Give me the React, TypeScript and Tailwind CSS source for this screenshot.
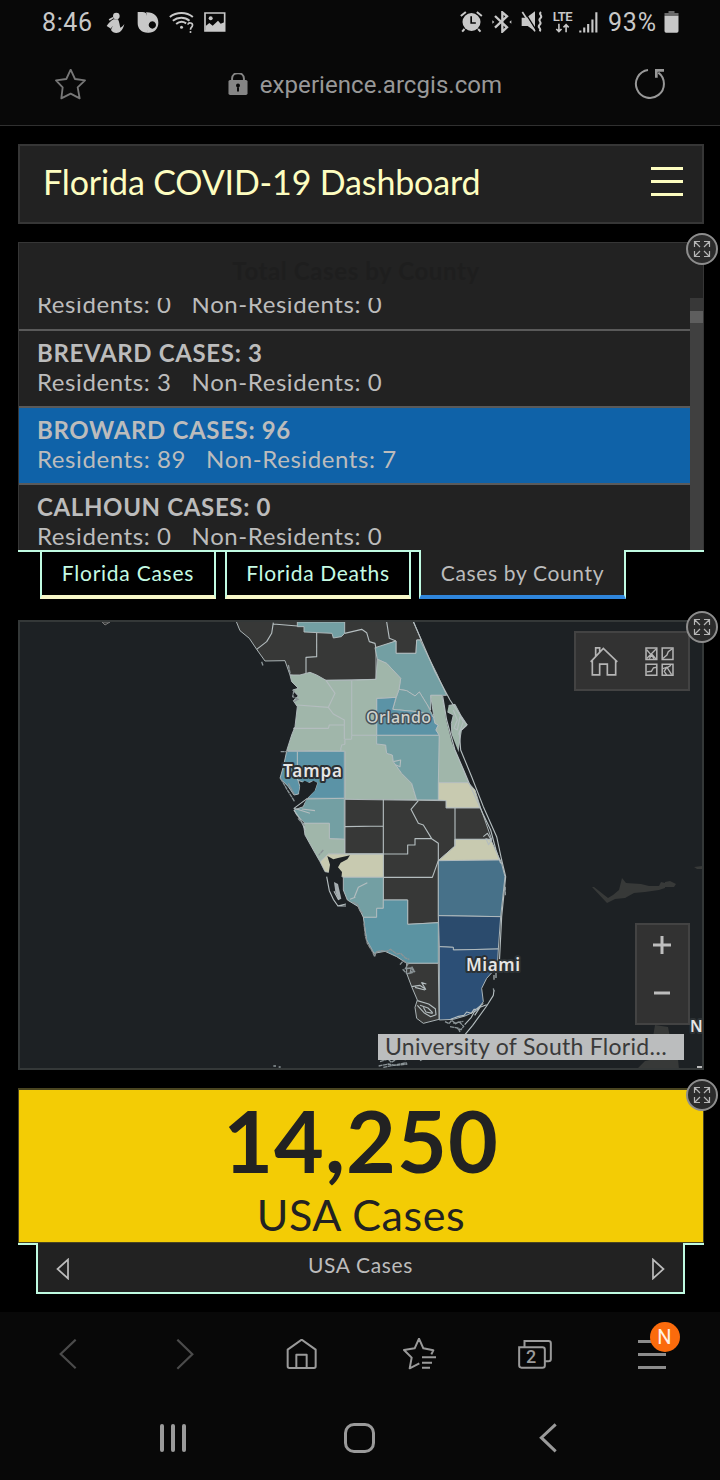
import React from "react";

type IconProps = {
  box: string;
  className: string;
  children: React.ReactNode;
};

function Icon({ box, className, children }: IconProps) {
  return (
    <svg viewBox={box} className={className} fill="none" stroke="currentColor">
      {children}
    </svg>
  );
}

function StatusBar() {
  return (
    <div className="flex h-[44px] items-center justify-between pl-[42px] pr-[41px] text-[#c8c8c8]">
      <div className="flex items-center">
        <span className="w-[64px] text-[25px] leading-none tracking-[0.6px]">8:46</span>
        <Icon box="318 30 57 66" className="h-[22px] w-[19px]">
          <g fill="currentColor" stroke="none">
            <circle cx="349" cy="45" r="10" />
            <path d="M341 55c-9 5-16 12-21 20l13 8c2-4 3-6 5-8l-5 12c6 11 22 11 29 4 5-5 9-12 11-22-4 6-7 9-12 11-2-5-3-19-7-25z" />
            <path d="M326 55l12-7 3 4-12 7z" />
          </g>
        </Icon>
        <Icon box="412 30 66 66" className="ml-[12px] h-[22px] w-[22px]">
          <g fill="currentColor" stroke="none">
            <path d="M414 33h14c9 0 14 5 14 12v38c0 4 2 8 6 12-20 2-34-10-34-28z" />
            <path fillRule="evenodd" d="M439 34c24-1 37 13 37 31s-12 30-29 30c-3-3-6-7-6-12V47c0-6 0-9-2-13zM458 61a11 11 0 1 0 .1 0z" />
          </g>
        </Icon>
        <Icon box="507 30 74 66" className="ml-[10px] h-[22px] w-[25px]">
          <g strokeWidth="6">
            <path d="M509 48c20-16 50-16 69 0M518 59c15-12 36-12 50 0M528 69c9-8 21-8 30-2" />
            <path d="M563 71c2-8 15-6 14 2-1 7-6 6-6 13" strokeWidth="5" />
          </g>
          <circle cx="544" cy="79" r="4.500" fill="currentColor" stroke="none" />
          <circle cx="571" cy="93" r="3" fill="currentColor" stroke="none" />
        </Icon>
        <Icon box="611 32 66 66" className="ml-[10px] h-[22px] w-[22px]">
          <path d="M614 38h59v54h-59z" strokeWidth="5" />
          <path d="M616 92V77l11-9 10 8 16-15 8 9 11-4v26z" fill="currentColor" stroke="none" />
          <circle cx="631" cy="54" r="6" fill="currentColor" stroke="none" />
        </Icon>
      </div>
      <div className="flex items-center">
        <Icon box="298 30 68 66" className="h-[22px] w-[23px]">
          <circle cx="332" cy="63" r="27" fill="currentColor" stroke="none" />
          <path d="M300 45l15-12M363 45l-15-12M311 84l-7 8M352 84l7 8" strokeWidth="6" />
          <path d="M331 46v20h14" stroke="#080808" strokeWidth="5" />
        </Icon>
        <Icon box="395 30 60 66" className="ml-[9px] h-[22px] w-[20px]">
          <path d="M404 45l36 34-14 13V34l14 12-36 34" strokeWidth="7" />
          <path d="M396 58l6 5-6 5zM453 58l-6 5 6 5z" fill="currentColor" stroke="none" />
        </Icon>
        <Icon box="483 30 69 66" className="ml-[9px] h-[22px] w-[23px]">
          <path d="M485 50h14l26-19v60l-22-16h-18z" fill="currentColor" stroke="none" />
          <path d="M491 28l38 60" strokeWidth="4" stroke="#080808" />
          <path d="M487 33l38 58" strokeWidth="5" />
          <path d="M543 33c-10 8 8 10-2 19s8 10-2 19 8 10 0 20" strokeWidth="6" />
        </Icon>
        <span className="ml-[8px] flex h-[23px] w-[21px] flex-col items-center">
          <span className="text-[13px] font-semibold leading-[12px] tracking-[-0.5px]">LTE</span>
          <Icon box="585 68 46 30" className="h-[10px] w-[15px]">
            <path d="M597 70v22M589 86l8 8 8-8M619 96V74M611 81l8-8 8 8" strokeWidth="5" />
          </Icon>
        </span>
        <Icon box="658 30 58 66" className="ml-[6px] h-[22px] w-[19px]">
          <path d="M662 95v-6M674 95V80M686 95V69M699 95V55M711 95V33" strokeWidth="6.500" />
        </Icon>
        <span className="ml-[10px] w-[56px] text-[25px] leading-none tracking-[0.8px]">93%</span>
        <Icon box="914 30 44 66" className="h-[22px] w-[15px]">
          <path d="M915 44v-8h12v-6h18v6h12v8z" fill="#6a6a6a" stroke="none" />
          <path d="M915 44h42v46q0 5-5 5h-32q-5 0-5-5z" fill="currentColor" stroke="none" />
        </Icon>
      </div>
    </div>
  );
}

function AddressBar() {
  return (
    <div className="flex h-[81px] items-center justify-between pl-[55px] pr-[54px] text-[#989898]">
      <Icon box="164 207 93 96" className="h-[32px] w-[31px] text-[#777]">
        <path d="M211 209l13 28 30 4-22 21 6 33-27-14-28 14 4-33-20-21 31-4z" strokeWidth="5.500" strokeLinejoin="round" />
      </Icon>
      <div className="flex items-center gap-[12px] pl-[10px]">
        <Icon box="683 219 60 70" className="h-[23px] w-[20px] text-[#858585]">
          <path d="M695 242v-6c0-22 36-22 36 0v6" strokeWidth="6" />
          <rect x="684" y="240" width="58" height="46" rx="5" fill="currentColor" stroke="none" />
          <path d="M713 262v13" stroke="#080808" strokeWidth="6" />
          <circle cx="713" cy="257" r="6" fill="#080808" stroke="none" />
        </Icon>
        <span className="text-[24px] leading-none tracking-[0.05px]">experience.arcgis.com</span>
      </div>
      <Icon box="819 207 96 96" className="h-[32px] w-[32px]">
        <path d="M861 210a42 42 0 1 0 31 8" strokeWidth="6" />
        <path d="M886 233v-22h23" strokeWidth="8" />
      </Icon>
    </div>
  );
}

function ExpandButton({ place }: { place: string }) {
  return (
    <button className={`absolute flex h-[32px] w-[32px] items-center justify-center rounded-full border-2 border-[#8d8d8d] bg-[#2b2b2b] text-[#b5b5b5] ${place}`}>
      <Icon box="0 0 18 18" className="h-[18px] w-[18px]">
        <path d="M1.500 7V1.500H7M2 2l5 5M11 1.500h5.500V7M16 2l-5 5M1.500 11v5.500H7M2 16l5-5M11 16.500h5.500V11M16 16l-5-5" strokeWidth="1.200" />
      </Icon>
    </button>
  );
}

type County = { name: string; cases: number; residents: number; visitors: number; active?: boolean };

const counties: County[] = [
  { name: "BREVARD", cases: 3, residents: 3, visitors: 0 },
  { name: "BROWARD", cases: 96, residents: 89, visitors: 7, active: true },
  { name: "CALHOUN", cases: 0, residents: 0, visitors: 0 },
];

function Breakdown({ residents, visitors }: { residents: number; visitors: number }) {
  return (
    <p className="whitespace-pre text-[24px] leading-[29px] tracking-[0.58px]">
      {`Residents: ${residents}   Non-Residents: ${visitors}`}
    </p>
  );
}

function CountyList() {
  return (
    <section className="relative mt-[18px] flex h-[308px] flex-col border-x border-t border-[#363636] bg-[#222]">
      <h2 className="flex h-[55px] items-center justify-center pr-[10px] text-[24px] font-bold tracking-[0.6px] text-[#1e1e1e]">
        Total Cases by County
      </h2>
      <div className="flex min-h-0 flex-1">
        <div className="flex flex-1 flex-col overflow-hidden text-[#bcbcbc]">
          <div className="flex h-[33px] shrink-0 flex-col justify-end overflow-hidden border-b-2 border-[#5a5a5a] pb-[11px] pl-[18px]">
            <Breakdown residents={0} visitors={0} />
          </div>
          {counties.map((c) => (
            <div
              key={c.name}
              className={
                c.active
                  ? "h-[77px] shrink-0 border-b-2 border-[#5a5a5a] bg-[#0f62a8] pl-[18px] pt-[8px]"
                  : "h-[77px] shrink-0 border-b-2 border-[#5a5a5a] pl-[18px] pt-[8px]"
              }
            >
              <p className="text-[24px] font-bold leading-[28px] tracking-[0.65px]">
                {c.name} CASES: {c.cases}
              </p>
              <Breakdown residents={c.residents} visitors={c.visitors} />
            </div>
          ))}
        </div>
        <div className="w-[13px] bg-[#404040]">
          <div className="h-[13px] bg-[#383838]" />
          <div className="h-[12px] bg-[#5e5e5e]" />
        </div>
      </div>
      <ExpandButton place="right-[-15px] top-[-10px]" />
    </section>
  );
}

function Tabs() {
  return (
    <div className="flex h-[49px] text-[21px] text-[#c5fbe4]">
      <div className="w-[22px] border-t-2 border-[#c0fbe2]" />
      <div className="flex w-[176px] justify-center border-2 border-b-4 border-[#c0fbe2] border-b-[#f7f7c8] pt-[6px] leading-[30px] tracking-[0.75px]">
        Florida Cases
      </div>
      <div className="w-[9px] border-t-2 border-[#c0fbe2]" />
      <div className="flex w-[186px] justify-center border-2 border-b-4 border-[#c0fbe2] border-b-[#f7f7c8] pt-[6px] leading-[30px] tracking-[0.65px]">
        Florida Deaths
      </div>
      <div className="w-[8px] border-t-2 border-[#c0fbe2]" />
      <div className="flex w-[207px] justify-center border-x-2 border-b-4 border-x-[#c0fbe2] border-b-[#2f86dc] bg-[#222] pt-[8px] leading-[30px] tracking-[0.65px] text-[#bcbcbc]">
        Cases by County
      </div>
      <div className="flex-1 border-t-2 border-[#c0fbe2]" />
    </div>
  );
}

const regions: { fill: string; points: string }[] = [
  { fill: "#373837", points: "47,30 60,62 88,85 110,118 135,153 195,152 210,195 318,211 468,208 468,115 528,93 528,130 588,130 590,90 604,90 578,30" },
  { fill: "#739fa3", points: "232,36 374,36 374,70 364,80 340,84 336,70 252,66 252,50 232,50" },
  { fill: "#739fa3", points: "465,113 528,93 528,130 588,130 590,90 600,90 650,190 680,256 632,256 632,300 622,285 598,246 585,258 560,242 537,238 542,205 500,160 472,148" },
  { fill: "#739fa3", points: "537,238 560,242 585,258 598,246 622,285 640,320 600,306 518,298 528,265" },
  { fill: "#5b93a6", points: "470,265 528,262 518,298 600,306 640,320 645,340 655,345 648,360 658,376 470,376" },
  { fill: "#a0b6aa", points: "395,211 468,208 472,148 500,160 542,205 537,238 528,262 470,265 470,376 395,376" },
  { fill: "#a0b6aa", points: "210,195 240,195 270,187 290,195 318,211 395,211 395,388 375,388 375,403 365,405 362,424 200,422 215,375 225,350 232,290 220,272 235,258 218,240 235,235 215,215" },
  { fill: "#a0b6aa", points: "375,388 395,388 395,376 470,376 470,402 497,405 500,430 517,435 520,455 545,490 575,520 590,570 375,568 375,424 362,424 365,405 375,403" },
  { fill: "#739fa3", points: "470,376 658,376 658,570 590,570 575,520 545,490 520,455 517,435 500,430 497,405 470,402" },
  { fill: "#a0b6aa", points: "632,256 665,256 675,300 690,370 715,440 745,518 655,518 658,376 648,360 655,345 645,340 640,310" },
  { fill: "#c8cab0", points: "655,518 745,518 765,540 782,594 678,594 678,572 655,570" },
  { fill: "#a0b6aa", points: "677,288 705,283 722,315 742,345 724,362 714,425 696,385 694,340 700,315 680,305" },
  { fill: "#5b93a6", points: "232,424 373,424 373,565 262,565 285,540 292,518 275,515 258,520 232,510" },
  { fill: "#5b93a6", points: "200,424 232,424 232,505 240,530 236,552 222,555 205,530 180,505 190,470" },
  { fill: "#739fa3", points: "258,567 373,565 373,688 328,686 328,640 255,640 230,615 222,600 250,590" },
  { fill: "#a0b6aa", points: "250,640 328,640 328,686 375,688 375,732 325,732 300,755 280,720 255,675" },
  { fill: "#373837", points: "375,568 678,572 678,594 782,594 815,688 705,688 705,708 655,752 655,938 563,943 563,870 490,870 490,732 375,732" },
  { fill: "#c8cab0", points: "705,688 812,688 840,750 655,752 705,708" },
  { fill: "#c8cab0", points: "300,755 325,732 490,732 490,802 370,802 345,790 315,785" },
  { fill: "#739fa3", points: "370,802 490,802 490,895 470,895 470,922 430,922 415,890 382,870 370,840" },
  { fill: "#5b93a2", points: "490,870 563,870 563,943 655,938 655,1060 560,1060 530,1040 495,1024 462,1030 440,990 434,950 430,922 470,922 470,895 490,895" },
  { fill: "#477189", points: "655,752 842,750 855,800 842,920 655,917" },
  { fill: "#2b4b6d", points: "655,917 842,920 835,1017 700,1020 700,1012 658,1010" },
  { fill: "#2c4f76", points: "658,1010 700,1012 700,1020 835,1017 832,1070 800,1105 785,1135 790,1175 770,1202 735,1218 700,1228 658,1230" },
  { fill: "#373837", points: "560,1060 655,1060 657,1228 610,1240 590,1225 585,1192 592,1170 575,1130 560,1090" },
];

const borders: string[] = [
  "M160 38L155 70 140 95 110 118M160 42L232 48M290 68V140L258 142V190M374 70L425 58 440 68 448 95 465 100 468 115M500 36L508 85 528 93",
  "M318 211L345 250 325 292M232 285L325 292 340 312 373 330V388M220 355L325 355 328 345H373M520 455l22-5-2 20-14-6",
  "M375 650L490 648M490 568V732M375 732H563V705H585V686H635M595 572L573 598 595 640 610 645 635 686 655 700V752L637 802H490M705 594V708",
  "M578 30L645 185 690 270 740 345 718 365 722 420 755 500 790 590 830 680 845 750 857 800 845 920 838 1060",
  "M668 258L680 330 705 420 735 490 752 530 788 610 812 660 828 720 842 760",
  "M700 300l12 30-10 24 10 6 8-40 10 14-14 40",
  "M403 862L415 832 442 818M390 868l16-6",
  "M262 565L222 595 270 610M222 600l20 30 14 30M245 597l40 5",
  "M320 800l8 42 12 26 14 20 24 0M352 888l26-6M356 870l-14-26",
  "M575 1130l24-4 18 12-12-20 14 4M585 1132l30 8M592 1172l34 10 20 14 2 18-16 6-20-12-20-22M600 1186l24 8 14 14M610 1192l8 14 20 4",
  "M692 1228l20-8 20-4 8-10 14 4 8-12 14-2M822 1140l-2 16-20 32-42 58-28 34M790 1180l-24 20-12 22-20 22M800 1184l-20 8-16 24",
  "M822 1095v14M828 1080v24M790 680l12-10 12 20-8 14-8-18 18 6",
];

const specks: string[] = [
  "M125 155l4 12M205 165l6 28M222 240l-4 20 16 8-14 8M182 425h22M182 505l20 35 22 35M205 520l18 34M310 720l-14 16M234 625l20 22",
  "M398 876l14 6 8 20 8 8M432 940l4 36 6 24 14 22 8 18 4-14 16-4 16 2 12-6 18 14 12-2 14 14 12 4M540 1064l10-12 14 10-8 14 18-2-4 16 12-4-8-14M548 1078l14 14 16-8M575 1070l10 16",
  "M675 1235l12 6 8-10 12 10 10-6 14 14-8 10-12-4M690 1250l24 4 6 12M700 1240l30-6M480 1355l24-8 10 10 20-12 24 4M476 1368l30-6 20 4 36-4M500 1340l40-4M490 1372l70-14",
  "M600 1352l50-28M666 1306l4-6M820 1135l2 10M160 1368h8M176 1371h6M856 830v26",
];

function FloridaMap() {
  return (
    <svg viewBox="20 622 682 446" className="h-full w-full">
      <g fill="#373938">
        <path d="M592 887l2 0 14 11 5-3 6-5 3-12 4 5 15 1 8 2 10 0 2-4 4 1v5l-6 2-14 2-11 1-9 5-10 1-8 4z" />
        <path d="M665 882l5-1 6 3-2 3-9 0z" />
        <path d="M655 1025l13 2 2 10 7 12 2 20h-42l8-8 9-2-2-16z" />
        <path d="M694 867l8-1v3h-5z" />
        <path d="M102 622l8 0-5 3z" stroke="#777" />
      </g>
      <g transform="translate(220 610) scale(0.33333)">
        {regions.map((r) => (
          <polygon key={r.points} points={r.points} fill={r.fill} stroke="#b4bdbf" strokeWidth="2.800" strokeLinejoin="round" />
        ))}
        <path d="M242 522l12-10 16 8 10-8 12 6-8 24-22 22-14 24-22 6-8-14 22-14-2-20z" fill="#1d2124" />
        <path d="M322 738l18 10 14-4 36-8-8 12-20 10-8 14 12 14-2 20-8 14 6 30 10 20-16 4-16-30-16-26-6-18 8-10 4-26z" fill="#1d2124" />
        <path d="M342 816l12 6 10 44-8 4-10-24z" fill="#a5adb0" />
        <path d="M672 270l14 16-4 20 10 60 30 76 20 50-14-20-32-74-18-70z" fill="#1d2124" />
        {borders.map((d) => (
          <path key={d} d={d} fill="none" stroke="#b4bdbf" strokeWidth="3.400" strokeLinejoin="round" />
        ))}
        {specks.map((d) => (
          <path key={d} d={d} fill="none" stroke="#8b9497" strokeWidth="4" strokeDasharray="12 1.500" />
        ))}
      </g>
      <g
        fontFamily="'Noto Sans', sans-serif"
        fontSize="17"
        fontWeight="600"
        fill="#e6e6e6"
        stroke="#2c3134"
        strokeWidth="4"
        strokeLinejoin="round"
        paintOrder="stroke"
      >
        <text x="366" y="723" fontSize="16" fontWeight="500" fill="#d0d2ce" stroke="#45525a" strokeWidth="3" textLength="65">Orlando</text>
        <text x="283" y="777" textLength="59">Tampa</text>
        <text x="466" y="971" textLength="54">Miami</text>
        <text x="690" y="1032" fontSize="16">N</text>
      </g>
      <path d="M697 1067h5" stroke="#bbb" strokeWidth="2" />
    </svg>
  );
}

function MapPanel() {
  return (
    <section className="relative mt-[21px] h-[450px] border-2 border-[#343838] bg-[#1d2124]">
      <FloridaMap />
      <div className="absolute right-[12px] top-[9px] flex h-[60px] w-[116px] items-center border-2 border-[#434343] bg-[#323232] text-[#b5b5b5]">
        <Icon box="90 140 84 92" className="ml-[14px] h-[31px] w-[28px]">
          <path d="M92 187l38-40 42 40M97 183v43h22v-32h23v32h25v-43M107 170v-25h12v12" strokeWidth="5" />
        </Icon>
        <Icon box="257 142 86 86" className="ml-[27px] h-[29px] w-[29px]">
          <path d="M260 145h32v34h-32zM308 145h32v34h-32zM260 193h32v33h-32zM308 193h32v33h-32z" strokeWidth="4.500" />
          <path d="M262 150l12 14-12 12M290 148l-14 14 14 16M270 177l6-12 8 12M310 176l12-10 4-10 12-9M262 216l14-2 6-10 10-2M310 206l12-4 14 22M322 202l-8 12 8 12M334 196l-12 8" strokeWidth="4" />
        </Icon>
      </div>
      <div className="absolute bottom-[43px] right-[12px] flex h-[102px] w-[55px] flex-col items-center border-2 border-[#434343] bg-[#323232] pr-[1px] text-[#bdbdbd]">
        <Icon box="0 0 18 18" className="mt-[11px] h-[18px] w-[18px]">
          <path d="M9 0v18M0 9h18" strokeWidth="3" />
        </Icon>
        <Icon box="0 0 16 4" className="mt-[37px] h-[4px] w-[16px]">
          <path d="M0 2h16" strokeWidth="3" />
        </Icon>
      </div>
      <div className="absolute bottom-[8px] right-[18px] h-[26px] w-[306px] whitespace-nowrap bg-[#bbbdbe] pl-[7px] text-[23px] leading-[24px] tracking-[0.27px] text-[#3a3a3a]">
        University of South Florid…
      </div>
      <ExpandButton place="right-[-16px] top-[-11px]" />
    </section>
  );
}

function TotalPanel() {
  return (
    <section className="relative mt-[18px]">
      <div className="flex h-[155px] flex-col items-center border border-t-2 border-[#4a4520] bg-[#f3cc05] text-[#222]">
        <p className="mt-[6px] text-[86px] font-bold leading-[88px] tracking-[1px]">14,250</p>
        <p className="mt-[5px] text-[43px] leading-[52px] tracking-[0.6px]">USA Cases</p>
      </div>
      <div className="flex h-[51px]">
        <div className="w-[18px] border-t-2 border-[#c0fbe2]" />
        <div className="flex flex-1 items-center justify-between border-x-2 border-b-2 border-[#c0fbe2] bg-[#222] px-[18px] text-[#bcbcbc]">
          <Icon box="0 0 13 22" className="mt-[2px] h-[22px] w-[13px]">
            <path d="M12 1.500v19L1.500 11z" strokeWidth="1.700" />
          </Icon>
          <span className="mb-[6px] text-[21px] leading-none tracking-[0.65px]">USA Cases</span>
          <Icon box="0 0 13 22" className="mt-[2px] h-[22px] w-[13px]">
            <path d="M1 1.500v19L11.500 11z" strokeWidth="1.700" />
          </Icon>
        </div>
        <div className="w-[19px] border-t-2 border-[#c0fbe2]" />
      </div>
      <ExpandButton place="right-[-14px] top-[-9px]" />
    </section>
  );
}

function BrowserNav() {
  return (
    <nav className="flex h-[84px] items-center text-[#9a9a9a]">
      <div className="flex w-[126px] justify-center pl-[10px]">
        <Icon box="178 117 54 93" className="h-[31px] w-[18px] text-[#4b4b4b]">
          <path d="M228 119l-45 43 45 43" strokeWidth="6.500" />
        </Icon>
      </div>
      <div className="flex w-[117px] justify-center">
        <Icon box="530 117 54 93" className="h-[31px] w-[18px] text-[#4b4b4b]">
          <path d="M534 119l45 44-45 43" strokeWidth="6.500" />
        </Icon>
      </div>
      <div className="flex w-[117px] justify-center">
        <Icon box="859 117 93 93" className="h-[31px] w-[31px]">
          <path d="M864 149l42-30 42 30v50q0 5-5 5h-74q-5 0-5-5zM890 204v-40h31v40" strokeWidth="6" strokeLinejoin="round" />
        </Icon>
      </div>
      <div className="flex w-[117px] justify-center">
        <Icon box="126 115 102 96" className="h-[32px] w-[34px]">
          <path d="M214 164l6-12-30-6-13-29-13 29-32 5 23 23-6 32 29-15M186 173h42M186 189h30M186 204h24" strokeWidth="6" strokeLinejoin="round" />
        </Icon>
      </div>
      <div className="flex w-[117px] justify-center">
        <div className="relative h-[29px] w-[35px]">
          <Icon box="475 119 104 87" className="h-[29px] w-[35px]">
            <path d="M478 141h70q7 0 7 7v48q0 6-7 6h-63q-7 0-7-7zM494 138v-16h72q7 0 7 7v47q0 7-7 7h-9" strokeWidth="6" />
          </Icon>
          <span className="absolute left-[8px] top-[8px] text-[18px] font-medium leading-[18px]">2</span>
        </div>
      </div>
      <div className="flex w-[115px] justify-center">
        <div className="relative flex h-[29px] w-[28px] flex-col justify-between">
          <div className="h-[3px] bg-[#8c8c8c]" />
          <div className="h-[3px] bg-[#8c8c8c]" />
          <div className="h-[3px] bg-[#8c8c8c]" />
          <span className="absolute left-[12px] top-[-18px] flex h-[30px] w-[30px] items-center justify-center rounded-full bg-[#fb6b0c] text-[20px] text-[#fff0e4]">
            N
          </span>
        </div>
      </div>
    </nav>
  );
}

function SystemNav() {
  return (
    <nav className="flex h-[84px] items-center text-[#9a9a9a]">
      <div className="flex w-[346px] justify-center gap-[7px]">
        <span className="h-[28px] w-[4px] rounded-full bg-[#9a9a9a]" />
        <span className="h-[28px] w-[4px] rounded-full bg-[#9a9a9a]" />
        <span className="h-[28px] w-[4px] rounded-full bg-[#9a9a9a]" />
      </div>
      <div className="-ml-[2px] h-[30px] w-[31px] rounded-[10px] border-[3px] border-[#9a9a9a]" />
      <Icon box="536 370 54 90" className="ml-[164px] h-[30px] w-[18px]">
        <path d="M586 374l-43 40 43 41" strokeWidth="9" />
      </Icon>
    </nav>
  );
}

export default function App() {
  return (
    <div className="flex h-[1480px] w-[720px] flex-col overflow-hidden bg-black font-['Roboto',sans-serif]">
      <header className="h-[126px] border-b border-[#303030] bg-[#080808]">
        <StatusBar />
        <AddressBar />
      </header>
      <main className="flex h-[1186px] flex-col pl-[18px] pr-[16px] pt-[18px] font-['Lato',sans-serif]">
        <div className="flex h-[80px] items-center justify-between border-2 border-[#363636] bg-[#222] pl-[23px] pr-[19px] text-[#fdfdc0]">
          <h1 className="mb-[4px] text-[34px] leading-none tracking-[-0.15px]">Florida COVID-19 Dashboard</h1>
          <div className="mb-[6px] flex h-[29px] w-[32px] flex-col justify-between">
            <div className="h-[3px] bg-[#fdfdc0]" />
            <div className="h-[3px] bg-[#fdfdc0]" />
            <div className="h-[3px] bg-[#fdfdc0]" />
          </div>
        </div>
        <CountyList />
        <Tabs />
        <MapPanel />
        <TotalPanel />
      </main>
      <footer className="h-[168px] bg-[#080808]">
        <BrowserNav />
        <SystemNav />
      </footer>
    </div>
  );
}
